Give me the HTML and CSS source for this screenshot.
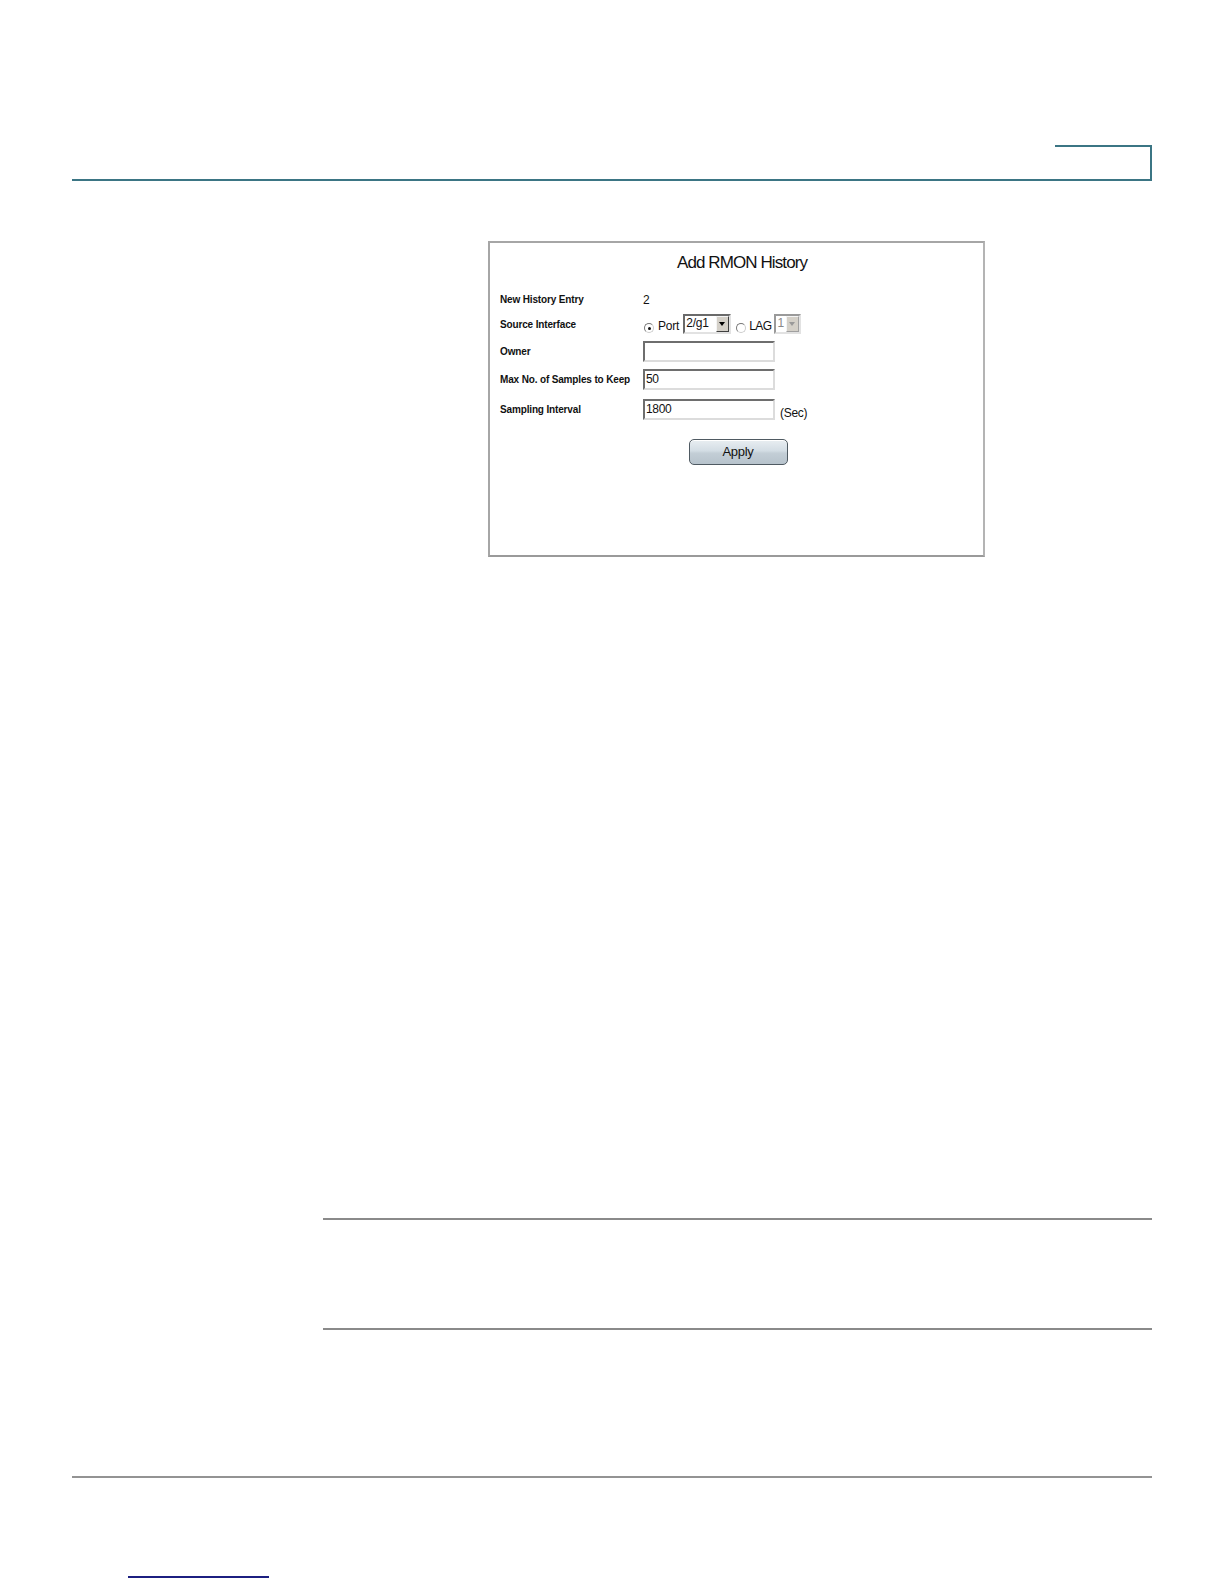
FILE: index.html
```html
<!DOCTYPE html>
<html lang="en">
<head>
<meta charset="utf-8">
<title>Add RMON History</title>
<link rel="stylesheet" href="styles.css">
</head>
<body>
<div class="page">
  <div class="header"><div class="tab"></div></div>

  <div class="figure">
    <div class="title">Add RMON History</div>
    <div class="form">
      <div class="label">New History Entry</div>
      <div class="value">2</div>

      <div class="label">Source Interface</div>
      <div class="value source">
        <span class="radio checked"></span>
        <span class="opt">Port</span>
        <span class="select port"><span class="sel-text">2/g1</span><span class="arrow"></span></span>
        <span class="radio lagradio"></span>
        <span class="opt lagopt">LAG</span>
        <span class="select lag disabled"><span class="sel-text">1</span><span class="arrow"></span></span>
      </div>

      <div class="label">Owner</div>
      <div class="value"><span class="input"></span></div>

      <div class="label">Max No. of Samples to Keep</div>
      <div class="value"><span class="input">50</span></div>

      <div class="label">Sampling Interval</div>
      <div class="value"><span class="input">1800</span><span class="unit">(Sec)</span></div>
    </div>
    <div class="actions"><span class="button">Apply</span></div>
  </div>

  <div class="rule rule-top"></div>
  <div class="rule rule-bottom"></div>
  <div class="footer-rule"></div>
  <div class="footer-link"></div>
</div>
</body>
</html>
```
FILE: styles.css
```css
html, body {
  margin: 0;
  padding: 0;
  background: #ffffff;
}
body {
  width: 1224px;
  height: 1584px;
  overflow: hidden;
  font-family: "Liberation Sans", Arial, sans-serif;
  color: #000;
}
.page {
  padding-top: 145px;
}
.header {
  margin-left: 72px;
  width: 1080px;
  height: 34px;
  border-bottom: 2px solid #3b7584;
  display: flex;
  justify-content: flex-end;
}
.tab {
  width: 95px;
  height: 32px;
  border-top: 2px solid #3b7584;
  border-right: 2px solid #3b7584;
}
.figure {
  box-sizing: border-box;
  margin-top: 60px;
  margin-left: 488px;
  width: 497px;
  height: 316px;
  border: 2px solid #a6a6a6;
  border-right-color: #b4b4b4;
  border-bottom-color: #9a9a9a;
  background: #fff;
}
.title {
  margin-top: 10px;
  height: 20px;
  line-height: 20px;
  font-size: 17px;
  letter-spacing: -0.9px;
  text-align: center;
  padding-left: 11px;
  color: #111;
}
.form {
  margin-top: 15px;
  padding-left: 10px;
  display: grid;
  grid-template-columns: 143px 1fr;
  grid-template-rows: 23px 26px 28px 29px 30px;
  align-items: center;
}
.label {
  font-size: 10px;
  font-weight: bold;
  letter-spacing: -0.15px;
  color: #111;
}
.value {
  display: flex;
  align-items: center;
  font-size: 12px;
  letter-spacing: -0.2px;
  color: #111;
}
.radio {
  box-sizing: border-box;
  width: 10px;
  height: 10px;
  border-radius: 50%;
  border: 1px solid #777;
  border-right-color: #ccc;
  border-bottom-color: #ccc;
  background: #fff;
  margin-top: 8px;
  margin-left: 1px;
  position: relative;
}
.radio.checked::after {
  content: "";
  position: absolute;
  left: 2.5px;
  top: 2.5px;
  width: 3px;
  height: 3px;
  border-radius: 50%;
  background: #111;
}
.lagradio {
  margin-left: 5px;
}
.opt {
  margin-left: 4px;
  margin-top: 4px;
}
.lagopt {
  margin-left: 3px;
  letter-spacing: -0.6px;
}
.select {
  box-sizing: border-box;
  height: 20px;
  margin-left: 4px;
  display: flex;
  align-items: stretch;
  border: 2px solid #6a6a6a;
  border-right-color: #e2e2e2;
  border-bottom-color: #e2e2e2;
  background: #fff;
}
.select.port {
  width: 48px;
}
.select.lag {
  width: 27px;
  margin-left: 3px;
  border-color: #9a9a9a #e2e2e2 #e2e2e2 #9a9a9a;
}
.sel-text {
  flex: 1;
  font-size: 12px;
  line-height: 15px;
  padding-left: 1px;
}
.lag .sel-text {
  color: #888;
}
.arrow {
  width: 13px;
  box-sizing: border-box;
  background: #d4d0c8;
  border: 1px solid #f4f4f4;
  border-right-color: #404040;
  border-bottom-color: #404040;
  position: relative;
}
.arrow::after {
  content: "";
  position: absolute;
  left: 2px;
  top: 5px;
  border-left: 3.5px solid transparent;
  border-right: 3.5px solid transparent;
  border-top: 4px solid #000;
}
.lag .arrow::after {
  border-top-color: #999;
}
.lag .arrow {
  border-right-color: #a0a0a0;
  border-bottom-color: #a0a0a0;
}
.input {
  box-sizing: border-box;
  width: 132px;
  height: 21px;
  border: 2px solid #6e6e6e;
  border-right-color: #dcdcdc;
  border-bottom-color: #dcdcdc;
  font-size: 12px;
  line-height: 17px;
  padding-left: 1px;
  letter-spacing: -0.3px;
  background: #fff;
}
.unit {
  margin-left: 5px;
  margin-top: 8px;
  letter-spacing: -0.3px;
}
.actions {
  margin-top: 15px;
  display: flex;
  justify-content: center;
  padding-left: 3px;
}
.button {
  box-sizing: border-box;
  width: 99px;
  height: 26px;
  border: 1px solid #4f5a62;
  border-radius: 5px;
  background: linear-gradient(#e9eef2 0%, #d3dde4 45%, #c3ced6 55%, #b7c3cc 100%);
  box-shadow: inset 0 1px 0 #fff;
  font-size: 13px;
  letter-spacing: -0.3px;
  line-height: 24px;
  text-align: center;
  color: #111;
}
.rule {
  margin-left: 323px;
  width: 829px;
  height: 0;
  border-top: 2px solid #8a8a8a;
}
.rule-top {
  margin-top: 661px;
}
.rule-bottom {
  margin-top: 108px;
}
.footer-rule {
  margin-left: 72px;
  width: 1080px;
  margin-top: 146px;
  border-top: 2px solid #939393;
}
.footer-link {
  margin-left: 128px;
  width: 141px;
  margin-top: 98px;
  border-top: 2px solid #1c1f80;
}
```
